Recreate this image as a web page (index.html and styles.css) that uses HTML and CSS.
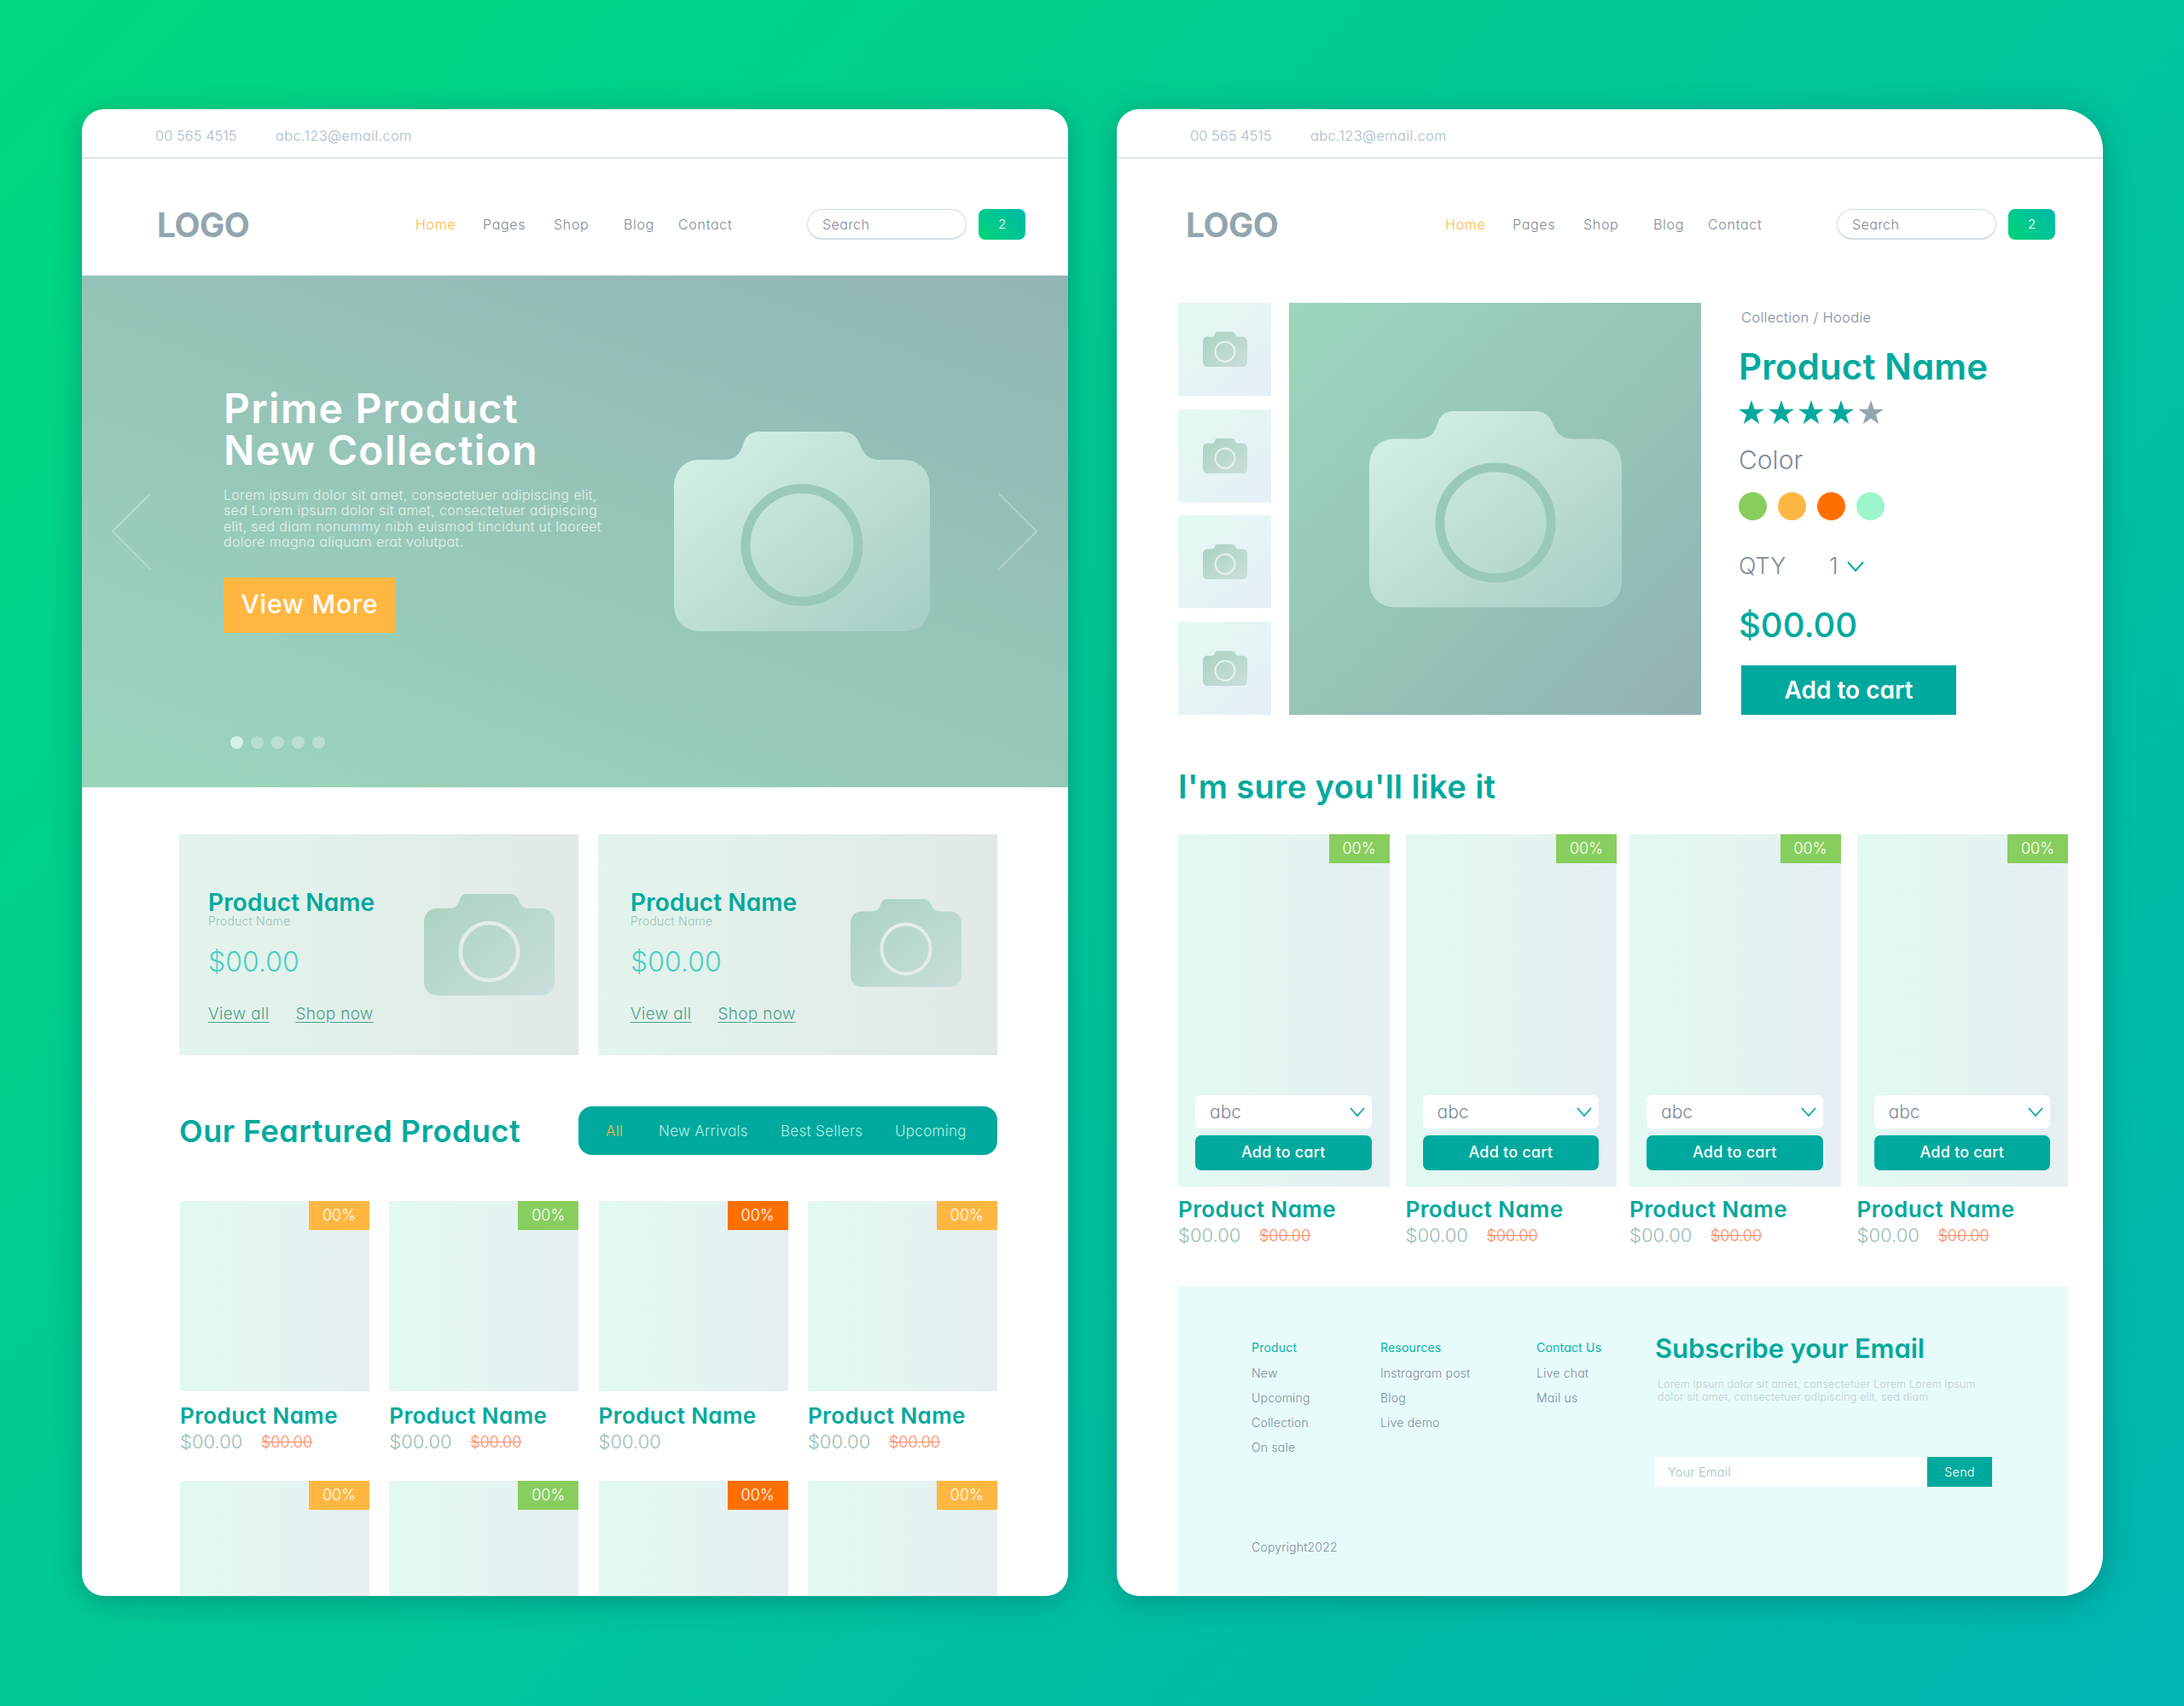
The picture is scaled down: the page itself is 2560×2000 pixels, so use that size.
FILE: index.html
```html
<!DOCTYPE html>
<html>
    <head>
        <meta charset="UTF-8">
        <title>Shop layouts</title>
        <link rel="stylesheet" href="styles.css">
    </head>
    <body>
        <svg class="defs" width="0" height="0">
            <defs>
                <linearGradient id="camLight" x1="0" y1="0" x2="1" y2="1">
                    <stop offset="0" stop-color="#d6f2e7"/>
                    <stop offset="1" stop-color="#a5cdc6"/>
                </linearGradient>
                <linearGradient id="camDark" x1="0" y1="0" x2="1" y2="1">
                    <stop offset="0" stop-color="#a9d3c0"/>
                    <stop offset="1" stop-color="#cadedc"/>
                </linearGradient>
                <symbol id="camera" viewBox="0 0 300 234" preserveAspectRatio="none">
                    <path class="camBody" d="M30 33H58C72 33 78 26 81 15C84 5 90 0 100 0H196C208 0 214 5 218 15C222 26 228 33 242 33H268C288 33 300 46 300 66V202C300 222 288 234 268 234H32C12 234 0 222 0 202V66C0 46 12 33 30 33Z"/>
                    <circle class="camLens" cx="150" cy="133" r="66"/>
                </symbol>
                <symbol id="star" viewBox="0 0 30 28">
                    <polygon points="15,0 18.6,10.7 30,10.7 20.8,17.3 24.3,28 15,21.4 5.7,28 9.2,17.3 0,10.7 11.4,10.7"/>
                </symbol>
                <symbol id="chevron" viewBox="0 0 20 12">
                    <polyline points="1,1 10,11 19,1"/>
                </symbol>
            </defs>
        </svg>

        <div class="stage">
            <!-- home page -->
            <div class="card">
                <div class="topbar">
                    <span class="phone">00 565 4515</span>
                    <span>abc.123@email.com</span>
                </div>
                <div class="header header-home">
                    <div class="logo">LOGO</div>
                    <div class="nav">
                        <span class="active">Home</span>
                        <span>Pages</span>
                        <span>Shop</span>
                        <span>Blog</span>
                        <span>Contact</span>
                    </div>
                    <div class="search">Search</div>
                    <div class="basket">2</div>
                </div>

                <div class="hero">
                    <svg class="arrow arrow-left" viewBox="0 0 46 90"><polyline points="45,1 1,45 45,89"/></svg>
                    <svg class="arrow arrow-right" viewBox="0 0 46 90"><polyline points="1,1 45,45 1,89"/></svg>
                    <div class="heroText">
                        <h1>Prime Product<br>New Collection</h1>
                        <p>Lorem ipsum dolor sit amet, consectetuer adipiscing elit,<br>sed Lorem ipsum dolor sit amet, consectetuer adipiscing<br>elit, sed diam nonummy nibh euismod tincidunt ut laoreet<br>dolore magna aliquam erat volutpat.</p>
                        <div class="viewMore">View More</div>
                        <div class="dots">
                            <i class="on"></i><i></i><i></i><i></i><i></i>
                        </div>
                    </div>
                    <svg class="cam cam-hero"><use href="#camera"/></svg>
                </div>

                <div class="promos">
                    <div class="promo">
                        <div class="promoText">
                            <div class="promoName">Product Name</div>
                            <div class="promoSub">Product Name</div>
                            <div class="promoPrice">$00.00</div>
                            <div class="promoLinks"><span>View all</span><span>Shop now</span></div>
                        </div>
                        <svg class="cam cam-promo"><use href="#camera"/></svg>
                    </div>
                    <div class="promo">
                        <div class="promoText promoText2">
                            <div class="promoName">Product Name</div>
                            <div class="promoSub">Product Name</div>
                            <div class="promoPrice">$00.00</div>
                            <div class="promoLinks"><span>View all</span><span>Shop now</span></div>
                        </div>
                        <svg class="cam cam-promo2"><use href="#camera"/></svg>
                    </div>
                </div>

                <div class="featured">
                    <h2>Our Feartured Product</h2>
                    <div class="tabs">
                        <span class="active">All</span>
                        <span>New Arrivals</span>
                        <span>Best Sellers</span>
                        <span>Upcoming</span>
                    </div>
                </div>

                <div class="grid">
                    <div class="product">
                        <div class="thumb"><span class="badge orange">00%</span></div>
                        <div class="name">Product Name</div>
                        <div class="prices"><span class="price">$00.00</span><span class="old">$00.00</span></div>
                    </div>
                    <div class="product">
                        <div class="thumb"><span class="badge green">00%</span></div>
                        <div class="name">Product Name</div>
                        <div class="prices"><span class="price">$00.00</span><span class="old">$00.00</span></div>
                    </div>
                    <div class="product">
                        <div class="thumb"><span class="badge red">00%</span></div>
                        <div class="name">Product Name</div>
                        <div class="prices"><span class="price">$00.00</span></div>
                    </div>
                    <div class="product">
                        <div class="thumb"><span class="badge orange">00%</span></div>
                        <div class="name">Product Name</div>
                        <div class="prices"><span class="price">$00.00</span><span class="old">$00.00</span></div>
                    </div>
                    <div class="product">
                        <div class="thumb"><span class="badge orange">00%</span></div>
                    </div>
                    <div class="product">
                        <div class="thumb"><span class="badge green">00%</span></div>
                    </div>
                    <div class="product">
                        <div class="thumb"><span class="badge red">00%</span></div>
                    </div>
                    <div class="product">
                        <div class="thumb"><span class="badge orange">00%</span></div>
                    </div>
                </div>
            </div>

            <!-- product page -->
            <div class="card card-product">
                <div class="topbar">
                    <span class="phone">00 565 4515</span>
                    <span>abc.123@email.com</span>
                </div>
                <div class="header header-product">
                    <div class="logo">LOGO</div>
                    <div class="nav">
                        <span class="active">Home</span>
                        <span>Pages</span>
                        <span>Shop</span>
                        <span>Blog</span>
                        <span>Contact</span>
                    </div>
                    <div class="search">Search</div>
                    <div class="basket">2</div>
                </div>

                <div class="detail">
                    <div class="gallery">
                        <div class="small"><svg class="cam cam-small"><use href="#camera"/></svg></div>
                        <div class="small"><svg class="cam cam-small"><use href="#camera"/></svg></div>
                        <div class="small"><svg class="cam cam-small"><use href="#camera"/></svg></div>
                        <div class="small"><svg class="cam cam-small"><use href="#camera"/></svg></div>
                    </div>
                    <div class="mainPic"><svg class="cam cam-main"><use href="#camera"/></svg></div>
                    <div class="info">
                        <div class="crumb">Collection / Hoodie</div>
                        <div class="title">Product Name</div>
                        <div class="stars">
                            <svg><use href="#star"/></svg>
                            <svg><use href="#star"/></svg>
                            <svg><use href="#star"/></svg>
                            <svg><use href="#star"/></svg>
                            <svg class="off"><use href="#star"/></svg>
                        </div>
                        <div class="colorLabel">Color</div>
                        <div class="swatches">
                            <i class="green"></i><i class="orange"></i><i class="red"></i><i class="mint"></i>
                        </div>
                        <div class="qty">
                            <span class="qtyLabel">QTY</span>
                            <span>1</span>
                            <svg class="chevron"><use href="#chevron"/></svg>
                        </div>
                        <div class="bigPrice">$00.00</div>
                        <div class="addBig">Add to cart</div>
                    </div>
                </div>

                <h2 class="like">I'm sure you'll like it</h2>

                <div class="reco">
                    <div class="pair">
                        <div class="item">
                            <div class="itemPic">
                                <span class="badge green">00%</span>
                                <div class="select">abc<svg class="chevron"><use href="#chevron"/></svg></div>
                                <div class="add">Add to cart</div>
                            </div>
                            <div class="name">Product Name</div>
                            <div class="prices"><span class="price">$00.00</span><span class="old">$00.00</span></div>
                        </div>
                        <div class="item">
                            <div class="itemPic">
                                <span class="badge green">00%</span>
                                <div class="select">abc<svg class="chevron"><use href="#chevron"/></svg></div>
                                <div class="add">Add to cart</div>
                            </div>
                            <div class="name">Product Name</div>
                            <div class="prices"><span class="price">$00.00</span><span class="old">$00.00</span></div>
                        </div>
                    </div>
                    <div class="pair">
                        <div class="item">
                            <div class="itemPic">
                                <span class="badge green">00%</span>
                                <div class="select">abc<svg class="chevron"><use href="#chevron"/></svg></div>
                                <div class="add">Add to cart</div>
                            </div>
                            <div class="name">Product Name</div>
                            <div class="prices"><span class="price">$00.00</span><span class="old">$00.00</span></div>
                        </div>
                        <div class="item">
                            <div class="itemPic">
                                <span class="badge green">00%</span>
                                <div class="select">abc<svg class="chevron"><use href="#chevron"/></svg></div>
                                <div class="add">Add to cart</div>
                            </div>
                            <div class="name">Product Name</div>
                            <div class="prices"><span class="price">$00.00</span><span class="old">$00.00</span></div>
                        </div>
                    </div>
                </div>

                <div class="footer">
                    <div class="footRow">
                        <div class="footCol footCol1">
                            <h4>Product</h4>
                            <div>New</div>
                            <div>Upcoming</div>
                            <div>Collection</div>
                            <div>On sale</div>
                        </div>
                        <div class="footCol footCol2">
                            <h4>Resources</h4>
                            <div>Instragram post</div>
                            <div>Blog</div>
                            <div>Live demo</div>
                        </div>
                        <div class="footCol footCol3">
                            <h4>Contact Us</h4>
                            <div>Live chat</div>
                            <div>Mail us</div>
                        </div>
                        <div class="subscribe">
                            <h3>Subscribe your Email</h3>
                            <p>Lorem ipsum dolor sit amet, consectetuer Lorem Lorem ipsum<br>dolor sit amet, consectetuer adipiscing elit, sed diam.</p>
                            <div class="form">
                                <div class="email">Your Email</div>
                                <div class="send">Send</div>
                            </div>
                        </div>
                    </div>
                    <div class="copyright">Copyright2022</div>
                </div>
            </div>
        </div>
    </body>
</html>
```

FILE: styles.css
```css
html, body {
    margin: 0;
    padding: 0;
}

body {
    width: 2560px;
    height: 2000px;
    overflow: hidden;
    background: linear-gradient(135deg, #00d97f, #00b4b2);
    font-family: "Inter", "Liberation Sans", sans-serif;
    font-feature-settings: "cv11";
    font-weight: 300;
    color: #7f8c99;
}

h1, h2, h3, h4, p {
    margin: 0;
}

.defs {
    position: absolute;
}

.stage {
    display: flex;
    gap: 57px;
    padding: 128px 96px;
}

.card {
    width: 1156px;
    height: 1743px;
    flex: none;
    overflow: hidden;
    background: #ffffff;
    border-radius: 26px;
    box-shadow: 0 6px 34px rgba(0, 70, 80, 0.35);
}

.card-product {
    border-radius: 26px 48px 48px 26px;
}

/* header */

.topbar {
    display: flex;
    align-items: center;
    height: 50px;
    padding: 6px 0 0 86px;
    border-bottom: 2px solid #dbe4ea;
    font-size: 16.5px;
    letter-spacing: 0.3px;
    color: #a9bccd;
}

.phone {
    width: 141px;
    letter-spacing: 0;
}

.header {
    display: flex;
    align-items: center;
    height: 120px;
    padding-top: 17px;
}

.header-home {
    padding-left: 88px;
}

.header-product {
    padding-left: 81px;
}

.logo {
    width: 303px;
    font-size: 39px;
    font-weight: 700;
    letter-spacing: -0.5px;
    color: #93a5ad;
}

.header-product .logo {
    width: 304px;
}

.nav {
    display: grid;
    grid-template-columns: 79px 83px 82px 64px 151px;
    font-size: 16px;
    letter-spacing: 0.7px;
}

.active {
    color: #ffb742;
}

.search {
    display: flex;
    align-items: center;
    box-sizing: border-box;
    width: 187px;
    height: 36px;
    padding-left: 17px;
    border: 1.5px solid #d3dde4;
    border-bottom-width: 2.5px;
    border-radius: 18px;
    font-size: 16px;
    letter-spacing: 0.4px;
}

.basket {
    width: 55px;
    height: 36px;
    margin-left: 14px;
    border-radius: 8px;
    background: linear-gradient(45deg, #00d57a, #00b8a8);
    color: #ffffff;
    font-size: 15px;
    line-height: 36px;
    text-align: center;
}

/* hero */

.hero {
    position: relative;
    display: flex;
    height: 600px;
    background: linear-gradient(20deg, #9bd6bc, #92b5b5);
}

.heroText {
    width: 460px;
    padding: 131px 0 0 166px;
}

.hero h1 {
    font-size: 48px;
    font-weight: 600;
    line-height: 49px;
    letter-spacing: 1.3px;
    white-space: nowrap;
    color: #ffffff;
}

.hero p {
    margin-top: 19px;
    font-size: 16px;
    line-height: 18.4px;
    letter-spacing: 0.3px;
    white-space: nowrap;
    color: #e3f3ed;
}

.viewMore {
    width: 202px;
    height: 65px;
    margin-top: 32px;
    background: #ffb742;
    color: #ffffff;
    font-size: 30px;
    font-weight: 500;
    line-height: 63px;
    letter-spacing: 0.9px;
    text-align: center;
}

.dots {
    display: flex;
    gap: 9px;
    margin: 121px 0 0 8px;
}

.dots i {
    width: 15px;
    height: 15px;
    border-radius: 50%;
    background: rgba(255, 255, 255, 0.3);
}

.dots i.on {
    background: #d6f0e6;
}

.arrow {
    position: absolute;
    top: 255px;
    width: 46px;
    height: 90px;
    fill: none;
    stroke: rgba(255, 255, 255, 0.28);
    stroke-width: 2;
}

.arrow-left {
    left: 35px;
}

.arrow-right {
    right: 36px;
}

.cam {
    flex: none;
    --body: url(#camLight);
    --lens: #9ac9bb;
    --ring: 11px;
}

.camBody {
    fill: var(--body);
}

.camLens {
    fill: none;
    stroke: var(--lens);
    stroke-width: var(--ring);
}

.cam-hero {
    width: 300px;
    height: 234px;
    margin: 183px 0 0 68px;
}

/* promo boxes */

.promos {
    display: flex;
    gap: 23px;
    padding: 55px 0 0 114px;
}

.promo {
    display: flex;
    width: 468px;
    height: 259px;
    background: linear-gradient(90deg, #e3f5ec, #e1e9e7);
}

.promoText {
    width: 253px;
    flex: none;
    padding: 65px 0 0 34px;
    box-sizing: border-box;
}

.promoText2 {
    padding-left: 38px;
}

.promoName {
    font-size: 28px;
    font-weight: 600;
    line-height: 30px;
    letter-spacing: 0.1px;
    color: #00a99d;
}

.promoSub {
    font-size: 14px;
    line-height: 14px;
    letter-spacing: 0.2px;
    color: #9dc0b8;
}

.promoPrice {
    margin-top: 23px;
    font-size: 32px;
    line-height: 36px;
    color: #4ecdc4;
}

.promoLinks {
    display: flex;
    gap: 31px;
    margin-top: 31px;
    font-size: 19px;
    line-height: 24px;
    letter-spacing: 0.3px;
    color: #4f9f8c;
}

.promoLinks span {
    text-decoration: underline;
    text-underline-offset: 3px;
}

.cam-promo, .cam-promo2 {
    --body: url(#camDark);
    --lens: #e2eeea;
    --ring: 9px;
}

.cam-promo {
    width: 153px;
    height: 119px;
    margin: 70px 0 0 34px;
}

.cam-promo2 {
    width: 130px;
    height: 103px;
    margin: 76px 0 0 43px;
}

/* featured */

.featured {
    display: flex;
    align-items: center;
    justify-content: space-between;
    margin-top: 60px;
    padding: 0 83px 0 114px;
}

h2 {
    font-size: 36px;
    font-weight: 600;
    letter-spacing: 0.5px;
    color: #00a99d;
}

.tabs {
    display: grid;
    grid-template-columns: 62px 143px 134px auto;
    align-items: center;
    box-sizing: border-box;
    width: 491px;
    height: 57px;
    padding-left: 32px;
    border-radius: 16px;
    background: #00a99d;
    font-size: 17px;
    letter-spacing: 0.3px;
    color: #b5f0e6;
}

.grid {
    display: grid;
    grid-template-columns: repeat(4, 222px);
    column-gap: 23.3px;
    row-gap: 31px;
    margin-top: 54px;
    padding-left: 115px;
}

.thumb, .itemPic {
    position: relative;
    background: linear-gradient(90deg, #e2f9f2, #e6eff3);
}

.thumb {
    height: 223px;
}

.badge {
    position: absolute;
    top: 0;
    right: 0;
    width: 71px;
    height: 34px;
    color: #ffffff;
    font-size: 18px;
    line-height: 34px;
    text-align: center;
}

.orange {
    background: #ffb742;
}

.green {
    background: #88ce5e;
}

.red {
    background: #ff6f00;
}

.mint {
    background: #9df5cc;
}

.name {
    margin-top: 14px;
    font-size: 26px;
    font-weight: 600;
    line-height: 30px;
    letter-spacing: 0.4px;
    color: #00a99d;
}

.prices {
    display: flex;
    align-items: center;
    height: 30px;
}

.price {
    width: 95px;
    font-size: 22px;
    color: #9abeb2;
}

.old {
    font-size: 18px;
    color: #ff8a65;
    text-decoration: line-through;
}

/* product detail */

.detail {
    display: flex;
    padding: 32px 0 0 72px;
}

.gallery {
    display: flex;
    flex-direction: column;
    justify-content: space-between;
    width: 109px;
    height: 483px;
}

.small {
    display: flex;
    justify-content: center;
    width: 109px;
    height: 109px;
    background: linear-gradient(135deg, #e3faf3, #e6eff6);
}

.cam-small {
    width: 52px;
    height: 41px;
    margin-top: 34px;
    --body: url(#camDark);
    --lens: #e5f2ee;
    --ring: 12px;
}

.mainPic {
    display: flex;
    justify-content: center;
    width: 483px;
    height: 483px;
    margin-left: 21px;
    background: linear-gradient(135deg, #9bd7bc, #92b2b3);
}

.cam-main {
    width: 296px;
    height: 230px;
    margin-top: 127px;
}

.info {
    margin-left: 44px;
    padding-top: 7px;
}

.crumb {
    margin-left: 3px;
    font-size: 16.5px;
    line-height: 20px;
    letter-spacing: 0.3px;
}

.title {
    margin-top: 25px;
    font-size: 42px;
    font-weight: 600;
    line-height: 46px;
    letter-spacing: 0.1px;
    color: #00a99d;
}

.stars {
    display: flex;
    gap: 5px;
    margin-top: 16px;
    fill: #00a99d;
}

.stars svg {
    width: 30px;
    height: 28px;
}

.stars .off {
    fill: #93a5ad;
}

.colorLabel {
    margin-top: 24px;
    font-size: 30px;
    line-height: 36px;
}

.swatches {
    display: flex;
    gap: 13px;
    margin-top: 20px;
}

.swatches i {
    width: 33px;
    height: 33px;
    border-radius: 50%;
}

.qty {
    display: flex;
    align-items: center;
    margin-top: 37px;
    font-size: 27px;
    line-height: 34px;
}

.qtyLabel {
    width: 106px;
}

.chevron {
    fill: none;
    stroke: #00a99d;
    stroke-width: 2;
}

.qty .chevron {
    width: 20px;
    height: 12px;
    margin-left: 10px;
}

.bigPrice {
    margin-top: 27px;
    font-size: 40px;
    font-weight: 500;
    line-height: 50px;
    color: #00a99d;
}

.addBig {
    width: 252px;
    height: 58px;
    margin: 22px 0 0 3px;
    background: #00a99d;
    color: #ffffff;
    font-size: 28px;
    font-weight: 600;
    line-height: 58px;
    text-align: center;
}

/* recommendations */

.like {
    margin: 62px 0 0 72px;
    font-size: 38px;
    line-height: 44px;
    letter-spacing: 0.4px;
}

.reco {
    display: flex;
    gap: 15px;
    margin: 34px 0 0 72px;
}

.pair {
    display: flex;
    gap: 19px;
}

.item {
    width: 247.5px;
}

.itemPic {
    display: flex;
    flex-direction: column;
    justify-content: flex-end;
    gap: 8px;
    box-sizing: border-box;
    height: 413px;
    padding: 0 21px 19px 20px;
}

.select {
    display: flex;
    align-items: center;
    justify-content: space-between;
    height: 39px;
    padding: 0 8px 0 17px;
    border-radius: 6px;
    background: #ffffff;
    font-size: 21px;
}

.select .chevron {
    width: 18px;
    height: 11px;
}

.add {
    height: 41px;
    border-radius: 7px;
    background: #00a99d;
    color: #ffffff;
    font-size: 18px;
    font-weight: 500;
    line-height: 40px;
    letter-spacing: 0.2px;
    text-align: center;
}

.item .name {
    margin-top: 12px;
}

/* footer */

.footer {
    display: flex;
    flex-direction: column;
    justify-content: space-between;
    box-sizing: border-box;
    width: 1043px;
    height: 363px;
    margin: 45px 0 0 72px;
    padding: 55px 0 49px 86px;
    background: #e8fbfb;
    font-size: 14px;
    letter-spacing: 0.2px;
}

.footRow {
    display: flex;
}

.footCol {
    padding-top: 7px;
    line-height: 29px;
}

.footCol1 {
    width: 151px;
}

.footCol2 {
    width: 183px;
}

.footCol3 {
    width: 139px;
}

.footCol h4 {
    margin-bottom: 1px;
    font-size: 14px;
    font-weight: 400;
    line-height: 20px;
    color: #00b5a5;
}

.footCol h4 + div {
    margin-top: 5px;
}

.subscribe h3 {
    font-size: 31px;
    font-weight: 600;
    line-height: 36px;
    letter-spacing: -0.1px;
    color: #00a99d;
}

.subscribe p {
    margin: 16px 0 0 3px;
    font-size: 12.5px;
    line-height: 15px;
    letter-spacing: 0.2px;
    color: #c0cfcf;
}

.form {
    display: flex;
    width: 395px;
    height: 35px;
    margin-top: 63px;
    line-height: 35px;
    font-size: 14.5px;
}

.email {
    flex: 1;
    padding-left: 15px;
    background: #ffffff;
    color: #9cc5b8;
}

.send {
    width: 76px;
    background: #00a99d;
    color: #ffffff;
    text-align: center;
}
```
